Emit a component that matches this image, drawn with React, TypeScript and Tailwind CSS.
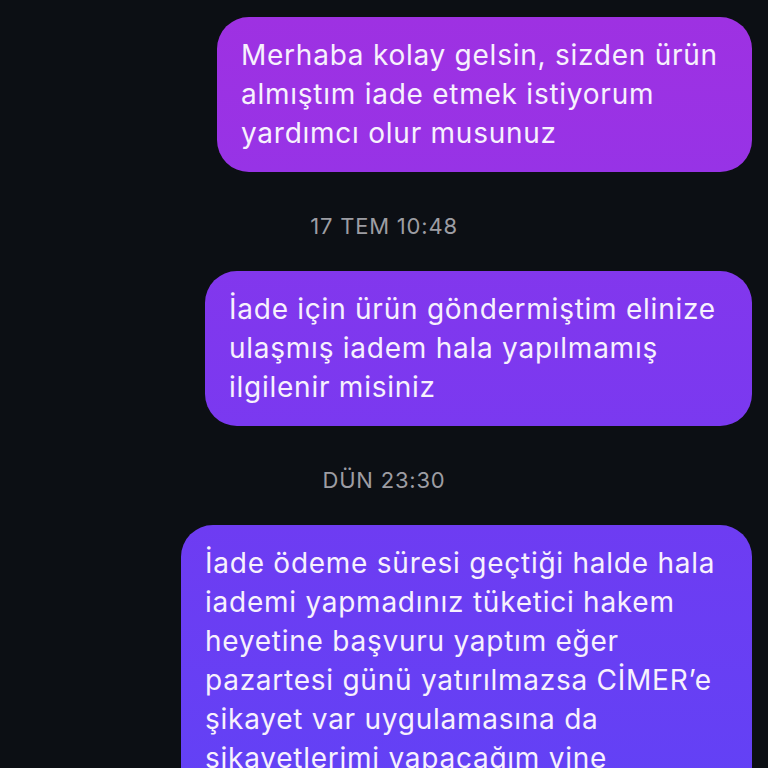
const bubbles = [
  {
    stamp: null as string | null,
    lines: ['Merhaba kolay gelsin, sizden ürün', 'almıştım iade etmek istiyorum', 'yardımcı olur musunuz'],
    width: 'w-[535px]',
    color: 'bg-gradient-to-b from-[#9e31e2] to-[#9733e6]',
  },
  {
    stamp: '17 TEM 10:48',
    lines: ['İade için ürün göndermiştim elinize', 'ulaşmış iadem hala yapılmamış', 'ilgilenir misiniz'],
    width: 'w-[547px]',
    color: 'bg-gradient-to-b from-[#8237ed] to-[#7a39f0]',
  },
  {
    stamp: 'DÜN 23:30',
    lines: [
      'İade ödeme süresi geçtiği halde hala',
      'iademi yapmadınız tüketici hakem',
      'heyetine başvuru yaptım eğer',
      'pazartesi günü yatırılmazsa CİMER’e',
      'şikayet var uygulamasına da',
      'şikayetlerimi yapacağım yine',
      'ödeme yapılmazsa',
    ],
    width: 'w-[571px]',
    color: 'bg-gradient-to-b from-[#6e3cf2] to-[#6042f6]',
  },
];

export default function App() {
  return (
    <div
      className="h-[768px] w-[768px] overflow-hidden bg-[#0c0f14] pt-[17px] pr-4"
      style={{ fontFamily: 'Inter, "Noto Sans", sans-serif' }}
    >
      {bubbles.map((b, i) => (
        <div key={i} className="flex flex-col items-end">
          {b.stamp && (
            <div className="mt-[40px] mb-[31px] h-[28px] w-full pl-4 text-center text-[22px] leading-[28px] tracking-[0.8px] text-[#9d9da3]">
              {b.stamp}
            </div>
          )}
          <div className={`${b.width} ${b.color} rounded-[32px] py-[19px] pl-6 text-[28px] leading-[39px] tracking-[0.75px] text-[#f7f1fd]`}>
            {b.lines.map((l, j) => (
              <div key={j} className="whitespace-nowrap">
                {l}
              </div>
            ))}
          </div>
        </div>
      ))}
    </div>
  );
}
